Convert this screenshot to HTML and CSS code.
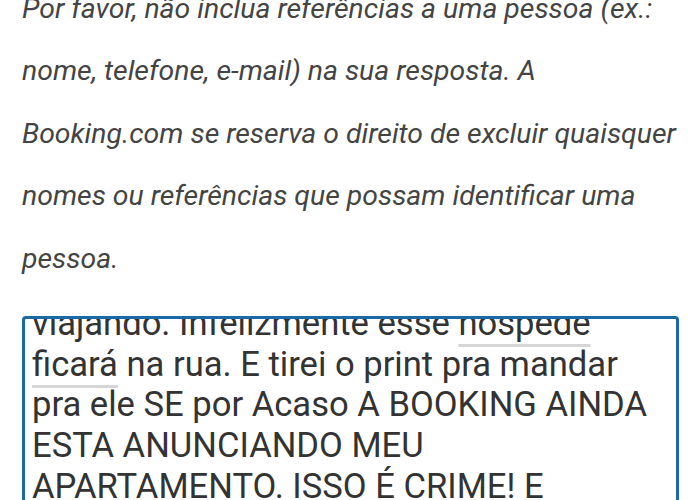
FILE: index.html
```html
<!DOCTYPE html>
<html lang="pt-BR">
<head>
    <meta charset="UTF-8">
    <meta name="viewport" content="width=device-width, initial-scale=1.0">
    <title>Avaliação</title>
    <link rel="stylesheet" href="styles.css">
</head>
<body>
<div class="review">
    <p class="hint">Por favor, não inclua referências a uma pessoa (ex.: nome, telefone, e-mail) na sua resposta. A Booking.com se reserva o direito de excluir quaisquer nomes ou referências que possam identificar uma pessoa.</p>
    <div class="answer">
        <div class="answer-text">viajando. Infelizmente esse <span class="spell">hospede</span> <span class="spell">ficará</span> na rua. E tirei o print pra mandar pra ele SE por Acaso A BOOKING AINDA ESTA ANUNCIANDO MEU APARTAMENTO. ISSO É CRIME! E</div>
    </div>
</div>
</body>
</html>
```

FILE: styles.css
```css
html, body {
    margin: 0;
    background: #ffffff;
    overflow: hidden;
}

.review {
    padding: 0 21px 0 22px;
    font-family: Roboto, "Noto Sans", sans-serif;
}

.hint {
    margin: -22px -12px 0 0;
    font-size: 28.4px;
    font-style: italic;
    line-height: 62.4px;
    color: #444444;
}

.answer {
    margin-top: 26px;
    height: 400px;
    border: 3px solid #1b6aa8;
    border-radius: 4px;
    overflow: hidden;
}

.answer-text {
    margin-top: -16px;
    padding: 0 20px 0 7px;
    font-size: 34.6px;
    line-height: 40.7px;
    color: #333333;
}

.spell {
    text-decoration: underline;
    text-decoration-color: #d6d6d6;
    text-decoration-thickness: 3px;
    text-underline-offset: 9px;
}
```
